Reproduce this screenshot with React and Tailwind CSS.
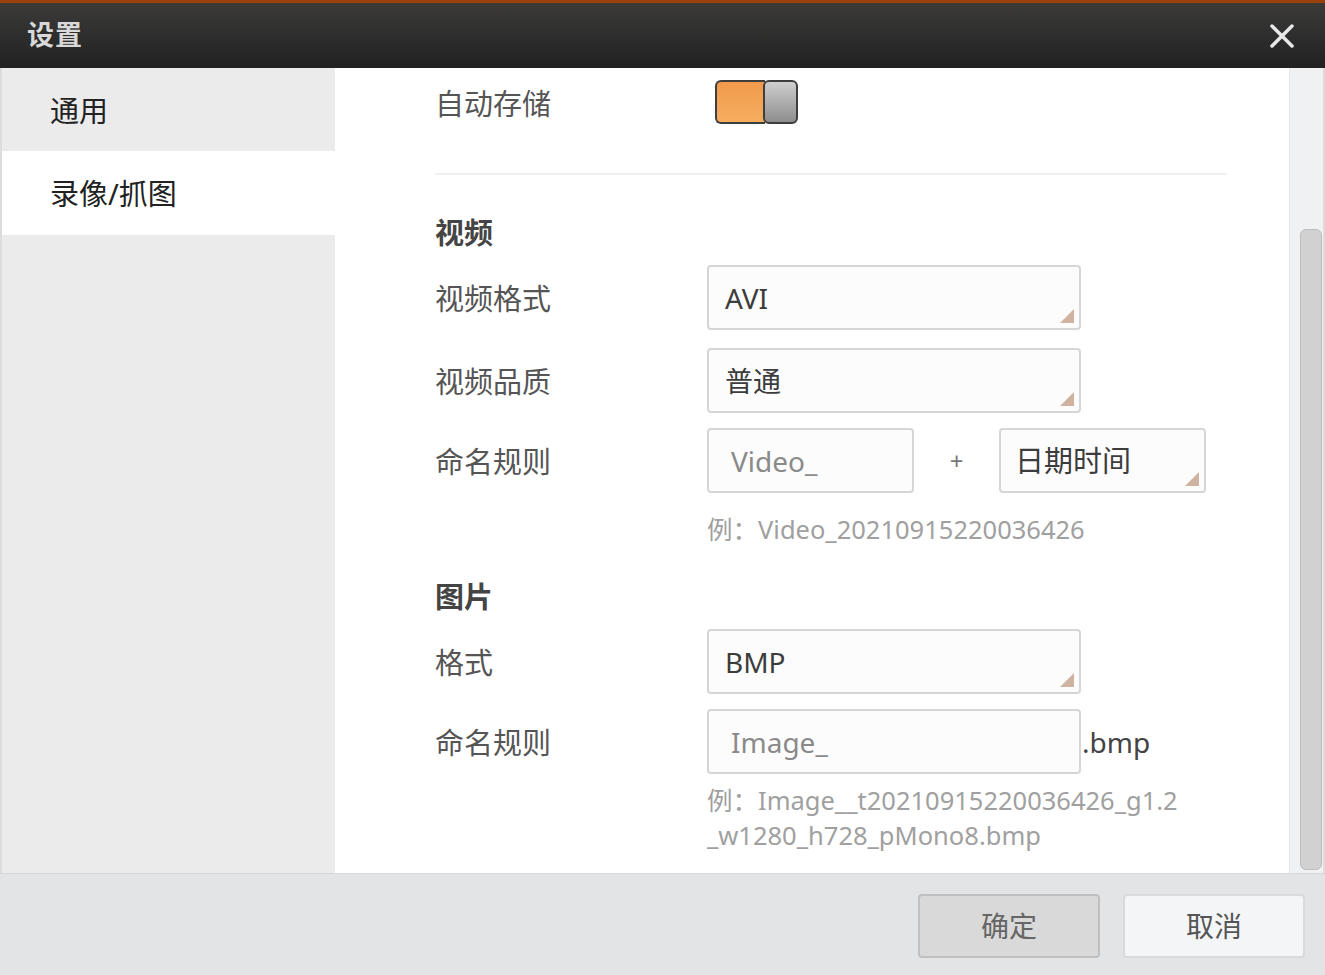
import React from 'react';

const font = { fontFamily: '"Noto Sans", "Noto Sans CJK SC", sans-serif' };

const Corner = () => (
  <svg className="absolute right-[5px] bottom-[5px]" width="14" height="14" viewBox="0 0 14 14">
    <polygon points="14,0 14,14 0,14" fill="#cfb3a0" />
  </svg>
);

const SelectBox = ({ value, className = 'w-[374px] pl-[16px]' }) => (
  <div className={`relative h-[65px] flex items-center border-2 border-[#d6d6d6] rounded-[4px] bg-[#fcfcfc] text-[28px] text-[#3c3c3c] ${className}`}>
    {value}
    <Corner />
  </div>
);

const TextBox = ({ value, className }) => (
  <div className={`h-[65px] flex items-center pl-[22px] border-2 border-[#d6d6d6] rounded-[4px] bg-[#fcfcfc] text-[28px] text-[#8a8a8a] ${className}`}>
    {value}
  </div>
);

const Label = ({ children }) => (
  <div className="w-[272px] shrink-0 text-[29px] text-[#555] pt-[3px]">{children}</div>
);

export default function App() {
  return (
    <div style={font} className="w-[1325px] h-[975px] flex flex-col bg-[#e3e4e5] overflow-hidden">
      {/* title bar */}
      <div className="h-[3px] bg-[#9c400c]" />
      <div className="h-[65px] flex items-center justify-between px-[27px] pr-[30px] bg-gradient-to-b from-[#3c3b3a] to-[#212121]">
        <span className="text-[27px] font-semibold text-[#d9d9d9] tracking-[1px]">设置</span>
        <svg width="26" height="26" viewBox="0 0 26 26">
          <path d="M3 3 L23 23 M23 3 L3 23" stroke="#e8e8e8" strokeWidth="3.5" strokeLinecap="round" />
        </svg>
      </div>

      <div className="h-[805px] flex border-l-2 border-r-2 border-[#dcdcdc]">
        {/* sidebar */}
        <div className="w-[333px] shrink-0 bg-[#ebebeb]">
          <div className="h-[83px] flex items-center pl-[48px] pt-[2px] text-[29px] text-[#222]">通用</div>
          <div className="h-[84px] flex items-center pl-[48px] pt-[2px] text-[29px] text-[#222] bg-white">录像/抓图</div>
        </div>

        {/* content */}
        <div className="flex-1 bg-white pl-[100px]">
          <div className="h-[68px] flex items-center">
            <Label>自动存储</Label>
            <div className="ml-[8px] flex h-[44px] w-[83px]">
              <div className="w-[50px] h-full rounded-l-[6px] border-2 border-r-0 border-[#3e3e3e] bg-gradient-to-b from-[#f19a4c] to-[#f6ad5e]" />
              <div className="w-[35px] h-full -ml-[2px] rounded-[6px] border-2 border-[#3e3e3e] bg-gradient-to-b from-[#cfcfcf] to-[#8e8e8e]" />
            </div>
          </div>

          <div className="mt-[37px] h-[2px] w-[792px] bg-[#efefef]" />

          <div className="mt-[38px] h-[40px] flex items-center text-[29px] font-bold text-[#444]">视频</div>

          <div className="mt-[12px] flex items-center">
            <Label>视频格式</Label>
            <SelectBox value="AVI" />
          </div>
          <div className="mt-[18px] flex items-center">
            <Label>视频品质</Label>
            <SelectBox value="普通" />
          </div>
          <div className="mt-[15px] flex items-center">
            <Label>命名规则</Label>
            <TextBox value="Video_" className="w-[207px]" />
            <span className="w-[85px] text-center text-[24px] text-[#777]">+</span>
            <SelectBox value="日期时间" className="w-[207px] pl-[14px] text-[29px]" />
          </div>
          <div className="mt-[18px] ml-[272px] h-[36px] flex items-center text-[25.5px] text-[#a0a0a0]">
            例：Video_20210915220036426
          </div>

          <div className="mt-[30px] h-[40px] flex items-center text-[29px] font-bold text-[#444]">图片</div>

          <div className="mt-[12px] flex items-center">
            <Label>格式</Label>
            <SelectBox value="BMP" />
          </div>
          <div className="mt-[15px] flex items-center">
            <Label>命名规则</Label>
            <TextBox value="Image_" className="w-[374px]" />
            <span className="ml-[1px] text-[28px] text-[#444]">.bmp</span>
          </div>
          <div className="mt-[9px] ml-[272px] text-[25.5px] leading-[35px] text-[#a0a0a0]">
            <div>例：Image__t20210915220036426_g1.2</div>
            <div>_w1280_h728_pMono8.bmp</div>
          </div>
        </div>

        {/* scrollbar */}
        <div className="w-[34px] shrink-0 bg-[#f0f1f3] border-l border-[#e6e6e6] pt-[161px] pb-[3px] pl-[10px] pr-[1px]">
          <div className="h-full rounded-[6px] bg-[#d1d1d1] border border-[#bdbdbd]" />
        </div>
      </div>

      {/* footer */}
      <div className="flex-1 flex justify-end gap-[23px] pt-[20px] pr-[20px] border-t border-[#d6d7d8]">
        <button className="w-[182px] h-[64px] rounded-[4px] bg-[#d9d9d9] border-2 border-[#c0c0c0] text-[28px] text-[#666]">确定</button>
        <button className="w-[182px] h-[64px] rounded-[4px] bg-[#f4f5f6] border-2 border-[#dadada] text-[28px] text-[#555]">取消</button>
      </div>
    </div>
  );
}
